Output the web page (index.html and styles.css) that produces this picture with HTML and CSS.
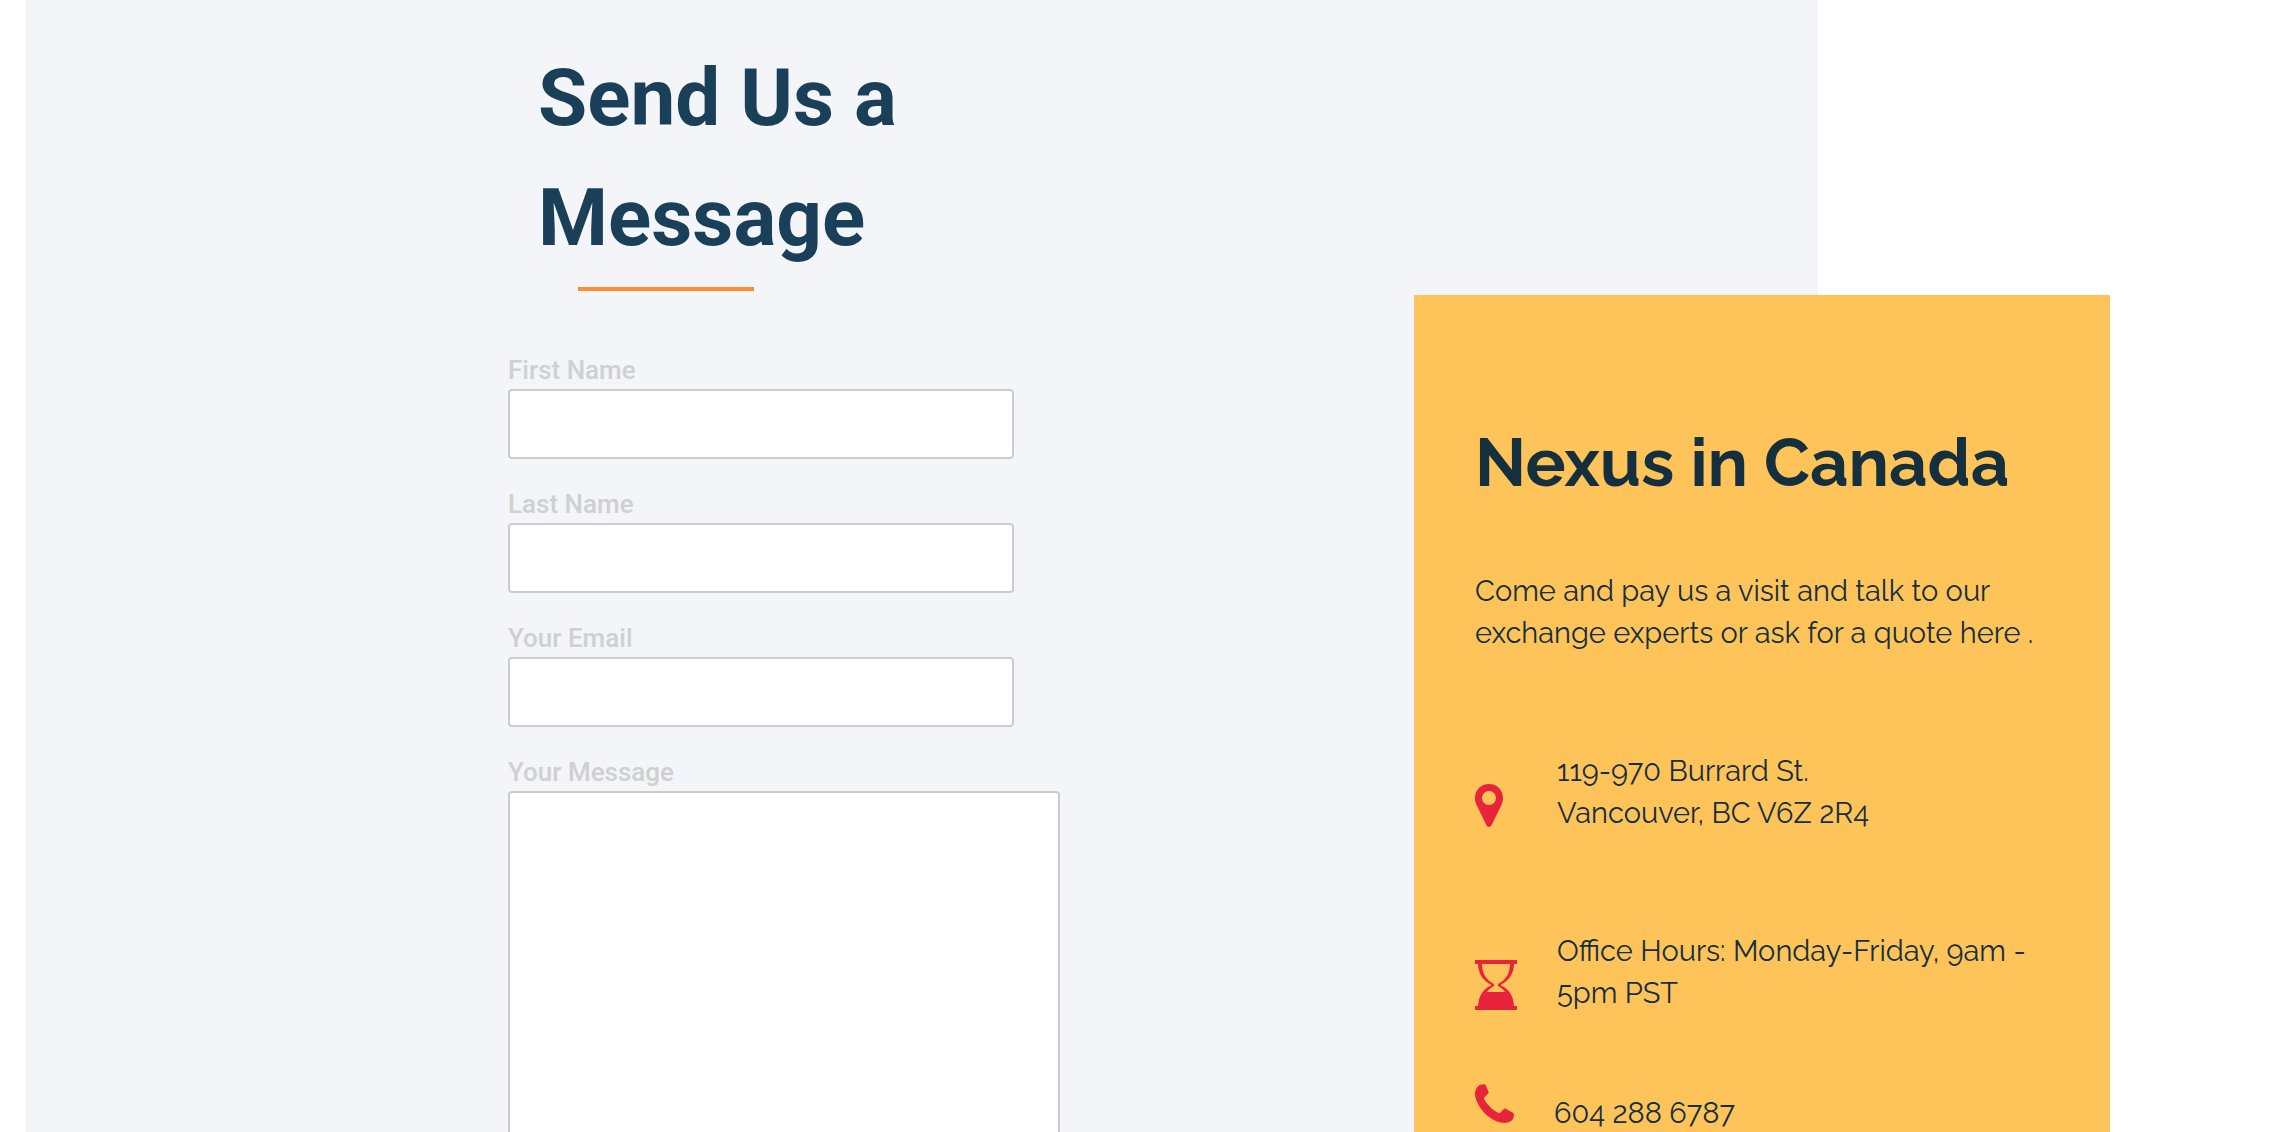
FILE: index.html
```html
<!DOCTYPE html>
<html lang="en">
<head>
<meta charset="utf-8">
<meta name="viewport" content="width=device-width, initial-scale=1">
<title>Contact Nexus</title>
<link rel="stylesheet" href="styles.css">
</head>
<body>
<main class="contact">
  <section class="message-panel">
    <div class="message">
      <h1 class="message-title">Send Us a Message</h1>
      <form class="message-form">
        <div class="field">
          <label for="first-name">First Name</label>
          <input class="control" id="first-name" type="text">
        </div>
        <div class="field">
          <label for="last-name">Last Name</label>
          <input class="control" id="last-name" type="text">
        </div>
        <div class="field">
          <label for="email">Your Email</label>
          <input class="control" id="email" type="email">
        </div>
        <div class="field">
          <label for="message">Your Message</label>
          <textarea class="control control-area" id="message"></textarea>
        </div>
      </form>
    </div>
  </section>
  <aside class="office">
    <h2 class="office-title">Nexus in Canada</h2>
    <p class="office-intro">Come and pay us a visit and talk to our<br>exchange experts or ask for a quote here .</p>
    <ul class="details">
      <li class="detail">
        <svg class="icon" width="28" height="43" viewBox="0 0 28 43" aria-hidden="true"><path fill-rule="evenodd" d="M14 0C6 0 0 6 0 14c0 3 .7 5 1.700 7.300L11.300 41c1 2.400 4.400 2.400 5.400 0L26.300 21.300C27.300 19 28 17 28 14 28 6 22 0 14 0zm0 7a7 7 0 1 1 0 14a7 7 0 0 1 0-14z"/></svg>
        <address class="detail-text">119-970 Burrard St.<br>Vancouver, BC V6Z 2R4</address>
      </li>
      <li class="detail detail-hours">
        <svg class="icon" width="42" height="50" viewBox="0 0 42 50" aria-hidden="true"><path fill-rule="evenodd" d="M0 0h42v4h-3C39 13 34 21 25.500 25 34 29 38.500 36 39 46h3v4H0v-4h3C3.500 36 8 29 16.500 25 8 21 3 13 3 4H0zM7 4c0 9 4 16 12 20v2c-3 1.500-5.500 3.500-7 6h18c-1.500-2.500-4-4.500-7-6v-2c8-4 12-11 12-20z"/></svg>
        <p class="detail-text">Office Hours: Monday-Friday, 9am -<br>5pm PST</p>
      </li>
      <li class="detail detail-phone">
        <svg class="icon" width="39" height="39" viewBox="0 0 39 39" aria-hidden="true"><path d="M9.500.2C7 0 4.300.8 2.800 2.500 1 4.500 0 7 0 9.800 0 16 4.500 24 10 29.500S23 39 29.500 39c3 0 5.500-1 7.500-2.800 1.500-1.600 2-4 2-6 0-.5-.3-1-.8-1.300l-7-4c-1-.5-1.900-.4-2.700.3l-3 3.200c-.7.6-1.500.8-2.400.4-3-1.400-5.500-3.300-8.100-6-2.500-2.600-4.700-5.200-5.800-7.800-.3-.7-.2-1.500.4-2l3.500-3.200c.6-.7.7-1.500.3-2.400L10.600 1C10.400.5 10 .2 9.500.2z"/></svg>
        <p class="detail-text">604 288 6787</p>
      </li>
    </ul>
  </aside>
</main>
</body>
</html>
```
FILE: styles.css
```css
* {
  box-sizing: border-box;
}

body,
h1,
h2,
p,
ul {
  margin: 0;
  padding: 0;
}

body {
  background: #fff;
  font-family: Roboto, sans-serif;
}

/* The office card straddles the right edge of the message panel. */
.contact {
  display: grid;
  grid-template-columns: 1fr 404px 292px;
  height: 100vh;
  padding: 0 162px 0 26px;
  overflow: hidden;
}

.message-panel {
  grid-area: 1 / 1 / 2 / 3;
  display: grid;
  grid-template-columns: 482fr 1310fr;
  padding-top: 38px;
  background: #f3f5f9;
}

.message {
  grid-column: 2;
  max-width: 552px;
}

.message-title {
  padding-left: 30px;
  color: #193f59;
  font-size: 80px;
  font-weight: 700;
  line-height: 120px;
}

.message-title::after {
  content: "";
  display: block;
  width: 176px;
  height: 4px;
  margin: 9px 0 0 40px;
  background: #ff8b36;
}

.message-form {
  display: grid;
  gap: 30px;
  margin-top: 64px;
}

.field {
  display: grid;
  gap: 4px;
}

.field label {
  color: #d0d0d0;
  font-size: 26px;
  font-weight: 500;
  line-height: 30px;
}

.control {
  width: 100%;
  max-width: 506px;
  height: 70px;
  padding: 0 16px;
  border: 2px solid #ccc;
  border-radius: 4px;
  background: #fff;
  font: inherit;
  font-size: 26px;
}

.control-area {
  max-width: 552px;
  height: 400px;
  padding: 16px;
  resize: none;
}

.office {
  grid-area: 1 / 2 / 2 / 4;
  margin-top: 295px;
  padding: 117px 40px 60px 61px;
  background: #ffc459;
  color: #142f3d;
  font-family: Raleway, Lato, sans-serif;
  font-size: 29px;
  line-height: 42px;
}

.office-title {
  font-size: 67px;
  font-weight: 700;
  line-height: 102px;
}

.office-intro {
  margin-top: 56px;
}

.details {
  display: grid;
  gap: 96px;
  margin-top: 96px;
  list-style: none;
}

.detail {
  display: grid;
  grid-template-columns: 82px 1fr;
  align-items: end;
}

.detail-phone {
  grid-template-columns: 79px 1fr;
  margin-top: -26px;
}

.detail-text {
  font-style: normal;
  white-space: nowrap;
}

.icon {
  margin-bottom: 7px;
  fill: #e8243c;
}

.detail-hours .icon {
  margin-bottom: 4px;
}

.detail-phone .icon {
  margin-bottom: 11px;
}
```
